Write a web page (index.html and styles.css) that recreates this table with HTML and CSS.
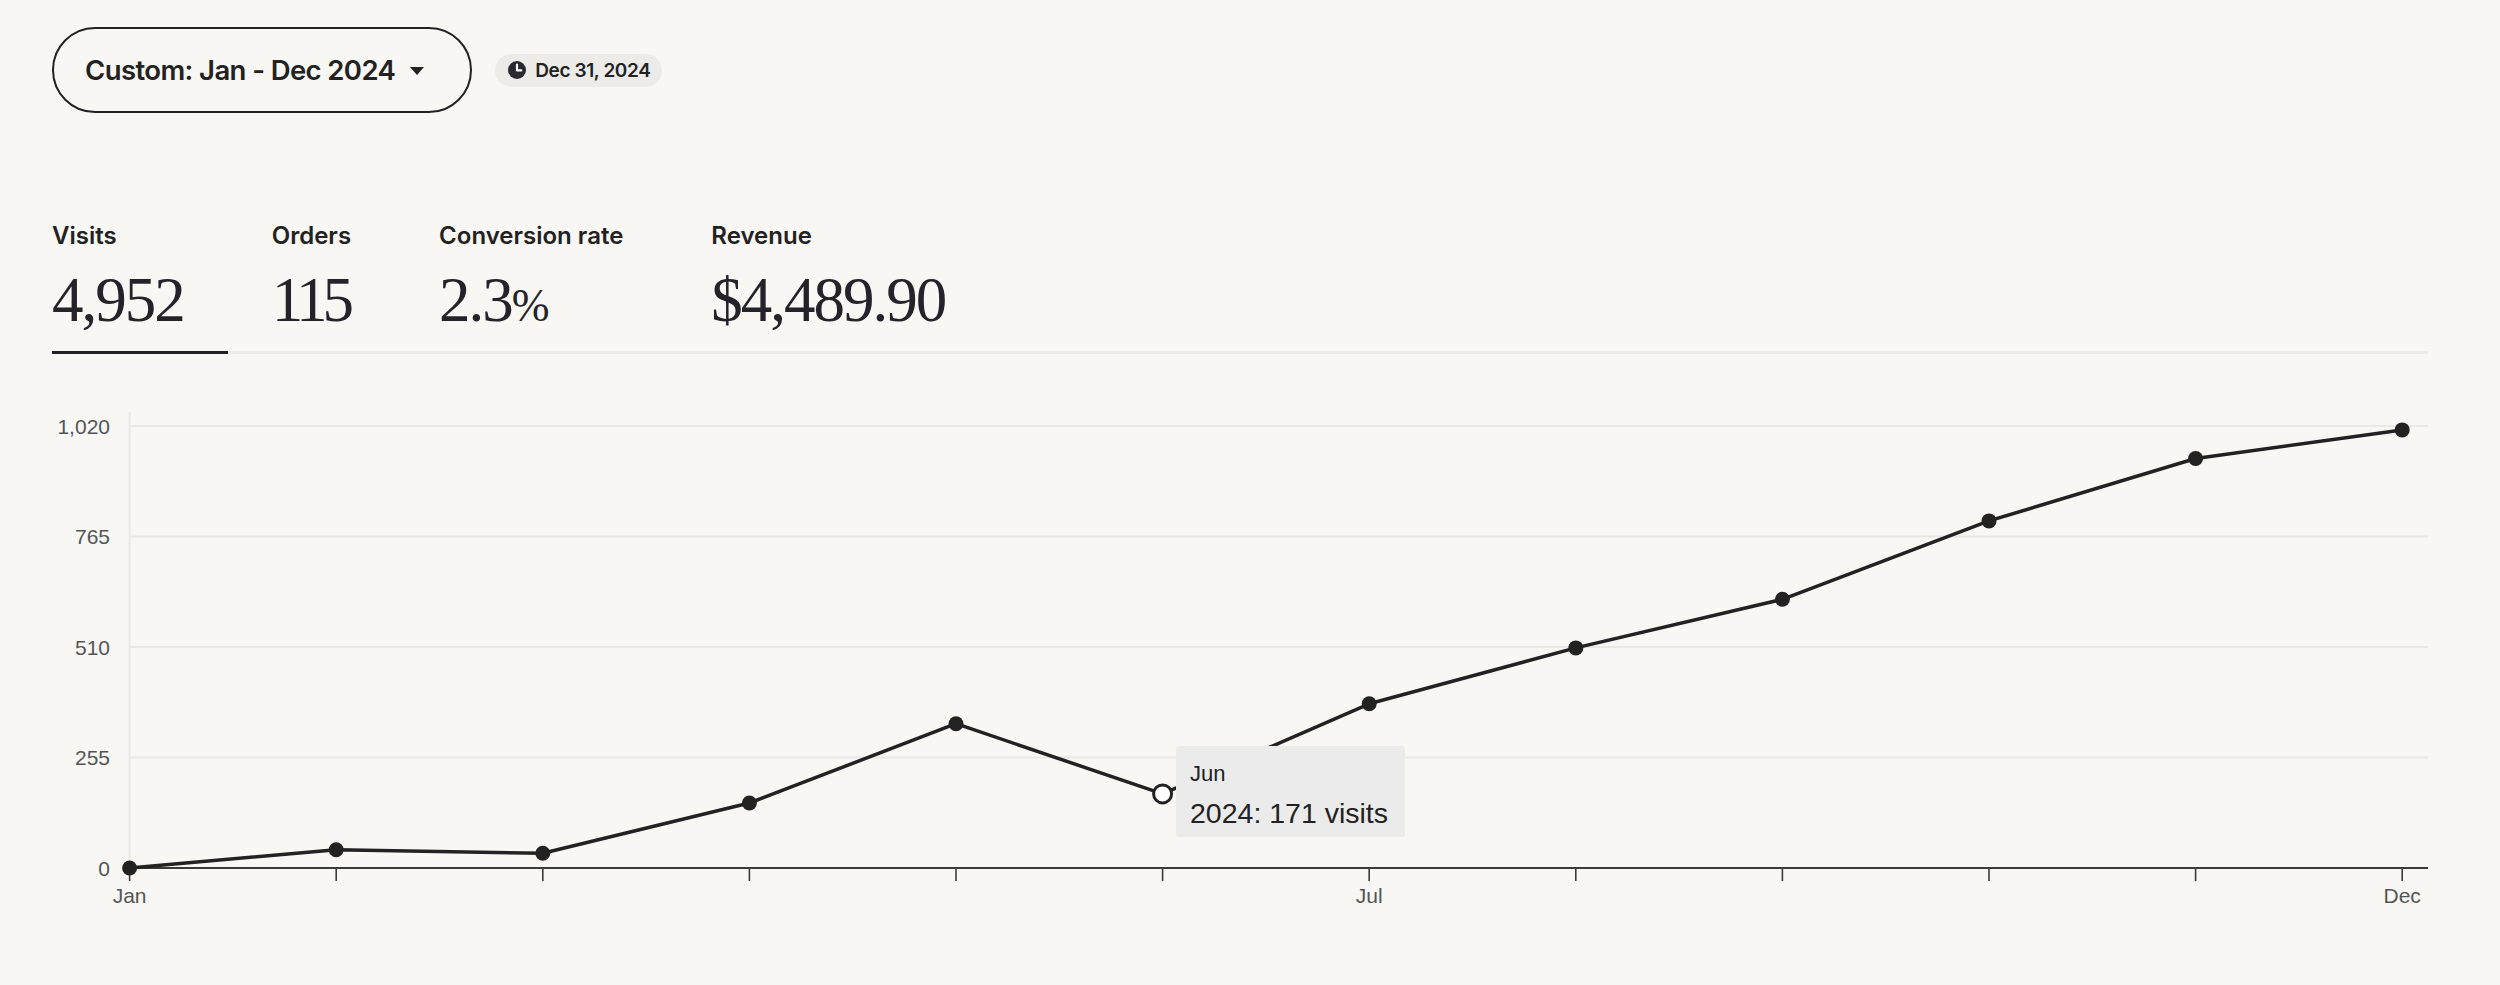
FILE: index.html
```html
<!DOCTYPE html>
<html lang="en">
<head>
<meta charset="utf-8">
<title>Stats</title>
<link rel="stylesheet" href="styles.css">
</head>
<body>
<main class="page">
  <div class="toolbar">
    <button class="range-btn" type="button">
      <span>Custom: Jan - Dec 2024</span>
      <svg class="caret" width="14" height="8" viewBox="0 0 14 8"><path d="M0 0 H14 L7 8 Z" fill="#222"/></svg>
    </button>
    <div class="date-badge">
      <svg class="clock" width="18" height="18" viewBox="0 0 18 18"><circle cx="9" cy="9" r="9" fill="#2a2830"/><path d="M9 3.6 V9.4 H13.2" fill="none" stroke="#fff" stroke-width="2.2" stroke-linecap="round" stroke-linejoin="round"/></svg>
      <span>Dec 31, 2024</span>
    </div>
  </div>

  <div class="tabs">
    <div class="tab active">
      <div class="tab-label">Visits</div>
      <div class="tab-value">4,952</div>
    </div>
    <div class="tab">
      <div class="tab-label">Orders</div>
      <div class="tab-value tab-value--ones">115</div>
    </div>
    <div class="tab">
      <div class="tab-label">Conversion rate</div>
      <div class="tab-value">2.3<span class="pct">%</span></div>
    </div>
    <div class="tab">
      <div class="tab-label">Revenue</div>
      <div class="tab-value">$4,489.90</div>
    </div>
  </div>

  <div class="chart">
    <svg class="chart-svg" width="2376" height="580" viewBox="0 0 2376 580">
      <g class="grid">
        <line x1="77.6" y1="58" x2="77.6" y2="514"/>
        <line x1="77.6" y1="72" x2="2376" y2="72"/>
        <line x1="77.6" y1="182.5" x2="2376" y2="182.5"/>
        <line x1="77.6" y1="293" x2="2376" y2="293"/>
        <line x1="77.6" y1="403.5" x2="2376" y2="403.5"/>
      </g>
      <g class="ylabels">
        <text x="58" y="79.5">1,020</text>
        <text x="58" y="190">765</text>
        <text x="58" y="300.5">510</text>
        <text x="58" y="411">255</text>
        <text x="58" y="521.5">0</text>
      </g>
      <line class="axis" x1="77.6" y1="514" x2="2376" y2="514"/>
      <g class="ticks">
        <line x1="77.6" y1="514" x2="77.6" y2="527"/>
        <line x1="284.2" y1="514" x2="284.2" y2="527"/>
        <line x1="490.8" y1="514" x2="490.8" y2="527"/>
        <line x1="697.4" y1="514" x2="697.4" y2="527"/>
        <line x1="904" y1="514" x2="904" y2="527"/>
        <line x1="1110.6" y1="514" x2="1110.6" y2="527"/>
        <line x1="1317.2" y1="514" x2="1317.2" y2="527"/>
        <line x1="1523.8" y1="514" x2="1523.8" y2="527"/>
        <line x1="1730.4" y1="514" x2="1730.4" y2="527"/>
        <line x1="1937" y1="514" x2="1937" y2="527"/>
        <line x1="2143.6" y1="514" x2="2143.6" y2="527"/>
        <line x1="2350.2" y1="514" x2="2350.2" y2="527"/>
      </g>
      <g class="xlabels">
        <text x="77.6" y="549">Jan</text>
        <text x="1317.2" y="549">Jul</text>
        <text x="2350.2" y="549">Dec</text>
      </g>
      <polyline class="series" points="77.6,514 284.2,495.8 490.8,499.3 697.4,449 904,369.7 1110.6,439.9 1317.2,349.8 1523.8,293.9 1730.4,245.3 1937,166.9 2143.6,104.5 2350.2,75.9"/>
      <g class="dots">
        <circle cx="77.6" cy="514" r="7.5"/>
        <circle cx="284.2" cy="495.8" r="7.5"/>
        <circle cx="490.8" cy="499.3" r="7.5"/>
        <circle cx="697.4" cy="449" r="7.5"/>
        <circle cx="904" cy="369.7" r="7.5"/>
        <circle cx="1317.2" cy="349.8" r="7.5"/>
        <circle cx="1523.8" cy="293.9" r="7.5"/>
        <circle cx="1730.4" cy="245.3" r="7.5"/>
        <circle cx="1937" cy="166.9" r="7.5"/>
        <circle cx="2143.6" cy="104.5" r="7.5"/>
        <circle cx="2350.2" cy="75.9" r="7.5"/>
      </g>
      <circle class="hover-dot" cx="1110.6" cy="439.9" r="9"/>
    </svg>
    <div class="tooltip">
      <div class="tip-title">Jun</div>
      <div class="tip-value">2024: 171 visits</div>
    </div>
  </div>
</main>
</body>
</html>
```

FILE: styles.css
```css
html, body {
  margin: 0;
  background: #f8f7f4;
  color: #222;
}

.page {
  padding: 27px 72px 0 52px;
  font-family: Inter, "Noto Sans", "Liberation Sans", sans-serif;
}

.toolbar {
  display: flex;
  align-items: center;
  gap: 23px;
}

.range-btn {
  box-sizing: border-box;
  height: 86px;
  display: flex;
  align-items: center;
  gap: 15px;
  padding: 0 46px 0 31px;
  border: 2px solid #222;
  border-radius: 43px;
  background: transparent;
  color: #222;
  font-family: Inter, "Liberation Sans", sans-serif;
  font-weight: 600;
  font-size: 27.5px;
  letter-spacing: -0.6px;
  cursor: pointer;
}

.caret {
  display: block;
  margin-top: 2px;
}

.date-badge {
  box-sizing: border-box;
  height: 33px;
  display: flex;
  align-items: center;
  gap: 9px;
  padding: 0 12px 0 13px;
  border-radius: 17px;
  background: #ecebe8;
  font-weight: 600;
  font-size: 19px;
  letter-spacing: -0.4px;
  color: #222;
}

.clock {
  display: block;
}

.tabs {
  margin-top: 109px;
  display: flex;
  gap: 44px;
  border-bottom: 3px solid #ecebe7;
}

.tab {
  padding: 0 44px 19px 0;
  margin-bottom: -3px;
  border-bottom: 3px solid transparent;
}

.tab.active {
  border-bottom-color: #222;
}

.tab-label {
  font-size: 24px;
  line-height: 28px;
  font-weight: 600;
  color: #222;
}

.tab-value {
  margin-top: 19px;
  font-family: "Liberation Serif", "DejaVu Serif", serif;
  font-size: 63px;
  line-height: 63px;
  letter-spacing: -2px;
  color: #24232a;
}

.tab-value--ones {
  letter-spacing: -5px;
}

.pct {
  font-size: 0.72em;
  line-height: 0;
  letter-spacing: 0;
}

.chart {
  position: relative;
}

.chart-svg {
  display: block;
}

.grid line {
  stroke: #e9e8e4;
  stroke-width: 2;
}

.axis {
  stroke: #3a3a3a;
  stroke-width: 2;
}

.ticks line {
  stroke: #3a3a3a;
  stroke-width: 1.6;
}

.ylabels text {
  font-family: "Liberation Sans", Arial, sans-serif;
  font-size: 21px;
  fill: #555;
  text-anchor: end;
}

.xlabels text {
  font-family: "Liberation Sans", Arial, sans-serif;
  font-size: 21px;
  fill: #555;
  text-anchor: middle;
}

.series {
  fill: none;
  stroke: #222;
  stroke-width: 3.5;
  stroke-linejoin: round;
}

.dots circle {
  fill: #222;
}

.hover-dot {
  fill: #fff;
  stroke: #222;
  stroke-width: 3;
}

.tooltip {
  position: absolute;
  left: 1124px;
  top: 392px;
  box-sizing: border-box;
  width: 229px;
  height: 91px;
  padding: 14px 14px 0 14px;
  background: #ebebeb;
  border-radius: 3px;
  font-family: "Liberation Sans", Arial, sans-serif;
  color: #222;
}

.tip-title {
  font-size: 22px;
  line-height: 28px;
}

.tip-value {
  margin-top: 8px;
  font-size: 28.5px;
  line-height: 34px;
}
```
